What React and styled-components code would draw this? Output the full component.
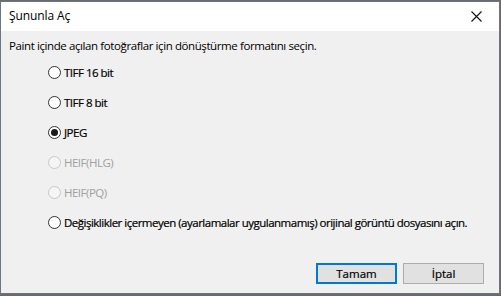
import React, {useState} from "react";
import styled, {createGlobalStyle} from "styled-components";

const GlobalStyle = createGlobalStyle`
  html, body {
    margin: 0;
    padding: 0;
    background: #6d6a66;
  }
  body {
    width: 501px;
    height: 296px;
    overflow: hidden;
  }
`

export const Window = styled.div`
  box-sizing: border-box;
  width: 500px;
  height: 293px;
  margin-top: 1px;
  border: 1px solid #6a7688;
  background-color: #f0f0f0;
  display: flex;
  flex-direction: column;
  font-family: "Open Sans", "Noto Sans", sans-serif;
  color: #000;
`

export const TitleBar = styled.div`
  height: 29px;
  background: #ffffff;
  display: flex;
  align-items: center;
  justify-content: space-between;
  padding: 0 0 0 8px;
`

export const Title = styled.div`
  font-size: 12px;
  letter-spacing: -0.1px;
  margin-top: -2px;
`

export const CloseButton = styled.div`
  width: 46px;
  height: 29px;
  display: flex;
  align-items: center;
  justify-content: center;
`

export const Body = styled.div`
  flex: 1;
  display: flex;
  flex-direction: column;
  padding: 7px 8px 0 8px;
`

export const Intro = styled.div`
  font-size: 11.5px;
  letter-spacing: -0.4px;
  height: 20px;
  white-space: nowrap;
`

export const Options = styled.div`
  display: flex;
  flex-direction: column;
  padding-left: 39px;
  margin-top: -1px;
`

export const OptionRow = styled.label`
  display: flex;
  align-items: center;
  height: 30px;
  gap: 3px;
  font-size: 11.5px;
  letter-spacing: -0.5px;
  white-space: nowrap;
  color: ${props => props.disabled ? "#a0a0a0" : "#000"};
  -webkit-text-stroke: ${props => props.disabled ? "0" : "0.2px"};
`

export const RadioCircle = styled.span`
  box-sizing: border-box;
  width: 13px;
  height: 13px;
  border-radius: 50%;
  border: 1px solid ${props => props.disabled ? "#c8c8c8" : "#333"};
  background: ${props => props.disabled ? "#f5f5f5" : "#fff"};
  display: flex;
  align-items: center;
  justify-content: center;
  flex-shrink: 0;
`

export const RadioDot = styled.span`
  width: 7px;
  height: 7px;
  border-radius: 50%;
  background: #1a1a1a;
`

export const ButtonRow = styled.div`
  margin-top: auto;
  display: flex;
  justify-content: flex-end;
  gap: 6px;
  padding: 0 7px 9px 0;
`

export const Button = styled.button`
  box-sizing: border-box;
  width: 81px;
  height: 21px;
  background: #e1e1e1;
  border: ${props => props.primary ? "2px solid #0078d7" : "1px solid #adadad"};
  font-family: "Open Sans", "Noto Sans", sans-serif;
  font-size: 11.5px;
  -webkit-text-stroke: 0.2px;
  color: #000;
  padding: 0;
  margin: 0;
`

const options = [
    {label: "TIFF 16 bit"},
    {label: "TIFF 8 bit"},
    {label: "JPEG"},
    {label: "HEIF(HLG)", disabled: true},
    {label: "HEIF(PQ)", disabled: true},
    {label: "Değişiklikler içermeyen (ayarlamalar uygulanmamış) orijinal görüntü dosyasını açın."},
];

export default function App() {
    const [selected, setSelected] = useState(2);

    return (<>
            <GlobalStyle/>
            <Window>
                <TitleBar>
                    <Title>Şununla Aç</Title>
                    <CloseButton>
                        <svg width="11" height="11" viewBox="0 0 11 11">
                            <path d="M0.5 0.5 L10.5 10.5 M10.5 0.5 L0.5 10.5" stroke="#111" strokeWidth="1.1"/>
                        </svg>
                    </CloseButton>
                </TitleBar>
                <Body>
                    <Intro>Paint içinde açılan fotoğraflar için dönüştürme formatını seçin.</Intro>
                    <Options>
                        {options.map((o, i) =>
                            <OptionRow key={i} disabled={o.disabled} onClick={() => !o.disabled && setSelected(i)}>
                                <RadioCircle disabled={o.disabled}>
                                    {selected === i && <RadioDot/>}
                                </RadioCircle>
                                {o.label}
                            </OptionRow>
                        )}
                    </Options>
                    <ButtonRow>
                        <Button primary>Tamam</Button>
                        <Button>İptal</Button>
                    </ButtonRow>
                </Body>
            </Window>
        </>
    )
}
